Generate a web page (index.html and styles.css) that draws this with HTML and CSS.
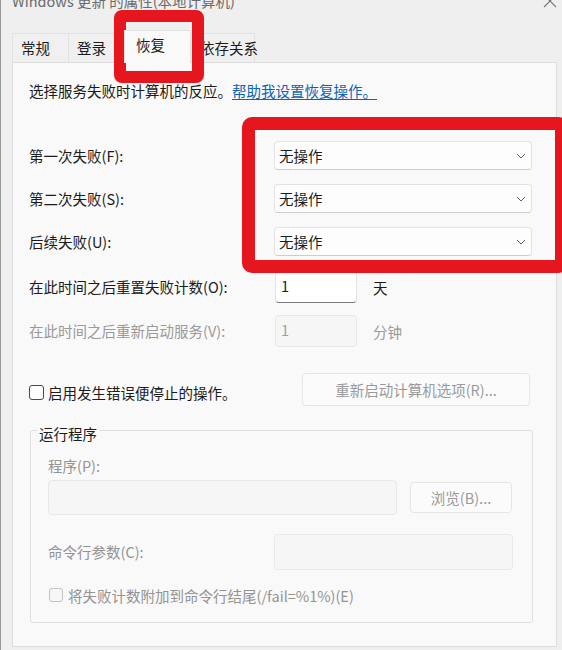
FILE: index.html
```html
<!DOCTYPE html>
<html lang="zh-CN">
<head>
<meta charset="utf-8">
<title>Windows 更新 的属性</title>
<link rel="stylesheet" href="styles.css">
</head>
<body>
<div class="window">
  <div class="titlebar">
    <span class="title">Windows 更新 的属性(本地计算机)</span>
    <svg class="close" width="14" height="14" viewBox="0 0 14 14"><path d="M1 1 L13 13 M13 1 L1 13" stroke="#777" stroke-width="1.1" fill="none"/></svg>
  </div>
  <div class="tabs">
    <div class="tab t1">常规</div>
    <div class="tab t2">登录</div>
    <div class="tab active">恢复</div>
    <div class="tab t4">依存关系</div>
  </div>
  <div class="panel">
    <p class="intro">选择服务失败时计算机的反应。<a class="link" href="#">帮助我设置恢复操作。</a></p>

    <div class="row r1">
      <span class="label">第一次失败(F):</span>
      <div class="select"><span>无操作</span><svg width="10" height="6" viewBox="0 0 10 6"><path d="M1 1 L5 5 L9 1" stroke="#5f5f5f" stroke-width="1" fill="none"/></svg></div>
    </div>
    <div class="row r2">
      <span class="label">第二次失败(S):</span>
      <div class="select"><span>无操作</span><svg width="10" height="6" viewBox="0 0 10 6"><path d="M1 1 L5 5 L9 1" stroke="#5f5f5f" stroke-width="1" fill="none"/></svg></div>
    </div>
    <div class="row r3">
      <span class="label">后续失败(U):</span>
      <div class="select"><span>无操作</span><svg width="10" height="6" viewBox="0 0 10 6"><path d="M1 1 L5 5 L9 1" stroke="#5f5f5f" stroke-width="1" fill="none"/></svg></div>
    </div>

    <div class="row r4">
      <span class="label">在此时间之后重置失败计数(O):</span>
      <div class="num">1</div>
      <span class="unit">天</span>
    </div>
    <div class="row r5 disabled">
      <span class="label">在此时间之后重新启动服务(V):</span>
      <div class="num num-off">1</div>
      <span class="unit">分钟</span>
    </div>

    <div class="row r6">
      <div class="chk-label"><span class="box"></span><span>启用发生错误便停止的操作。</span></div>
      <div class="btn btn-wide">重新启动计算机选项(R)...</div>
    </div>

    <div class="group">
      <div class="legend">运行程序</div>
      <div class="g-label">程序(P):</div>
      <div class="row prog-row">
        <div class="field field-prog"></div>
        <div class="btn btn-browse">浏览(B)...</div>
      </div>
      <div class="row cmd-row">
        <span class="g-label cmd-label">命令行参数(C):</span>
        <div class="field field-cmd"></div>
      </div>
      <div class="row chk2-row">
        <span class="box box-off"></span>
        <span class="g-text">将失败计数附加到命令行结尾(/fail=%1%)(E)</span>
      </div>
    </div>
  </div>

  <div class="mark mark-tab"></div>
  <div class="mark mark-selects"></div>
</div>
</body>
</html>
```

FILE: styles.css
```css
html, body {
  margin: 0;
  padding: 0;
}

body {
  background: #efefef;
  font-family: "Noto Sans CJK SC", "Noto Sans", sans-serif;
  font-size: 14.5px;
  color: #1b1b1b;
}

.window {
  position: relative;
  width: 562px;
  height: 650px;
  overflow: hidden;
  background: #efefef;
  box-shadow: inset 1px 0 0 #9a9a9a;
}

.titlebar {
  display: flex;
  height: 33px;
  box-sizing: border-box;
  padding: 0 5px 0 12px;
}

.title {
  font-size: 14.5px;
  line-height: 14px;
  margin-top: -6px;
  color: #6a6a6a;
  white-space: nowrap;
}

.close {
  margin-left: auto;
  margin-top: -6px;
}

.tabs {
  display: flex;
  align-items: flex-end;
  height: 29px;
  padding-left: 12px;
}

.tab {
  box-sizing: border-box;
  height: 29px;
  line-height: 27px;
  padding-left: 8px;
  border-top: 1px solid #e2e2e2;
  border-right: 1px solid #e2e2e2;
  background: #f0f0f0;
  white-space: nowrap;
}

.t1 {
  width: 57px;
  border-left: 1px solid #e2e2e2;
}

.t2 {
  width: 55px;
}

.active {
  width: 67px;
  height: 33px;
  margin-bottom: -1px;
  padding-left: 11px;
  border-left: 1px solid #e2e2e2;
  background: #f9f9f9;
  position: relative;
  z-index: 1;
}

.t4 {
  width: 64px;
  padding-left: 9px;
}

.panel {
  box-sizing: border-box;
  margin-left: 12px;
  width: 545px;
  height: 585px;
  border: 1px solid #dddddd;
  background: #f9f9f9;
  padding-left: 16px;
}

.intro {
  margin: 18px 0 0;
  line-height: 20px;
  white-space: nowrap;
}

.link {
  color: #0a63b8;
  text-decoration: underline;
  text-underline-offset: 2px;
}

.row {
  display: flex;
  align-items: center;
}

.label {
  width: 245px;
  flex: none;
  line-height: 20px;
  white-space: nowrap;
}

.r1 { margin-top: 40px; }
.r2, .r3 { margin-top: 14px; }
.r4 { margin-top: 15px; }
.r5 { margin-top: 12px; }
.r6 { margin-top: 26px; }

.select {
  box-sizing: border-box;
  width: 258px;
  height: 29px;
  border: 1px solid #e3e3e3;
  border-bottom-color: #cdcdcd;
  border-radius: 4px;
  background: #fdfdfd;
  display: flex;
  align-items: center;
  justify-content: space-between;
  padding: 0 5px 0 4px;
}

.num {
  box-sizing: border-box;
  width: 82px;
  height: 32px;
  margin-left: 1px;
  border: 1px solid #e3e3e3;
  border-bottom: 1px solid #7d7d7d;
  border-radius: 4px;
  background: #ffffff;
  padding-left: 5px;
  line-height: 28px;
}

.unit {
  margin-left: 16px;
}

.disabled {
  color: #9a9a9a;
}

.num-off {
  background: #f6f6f6;
  border: 1px solid #e8e8e8;
  color: #a0a0a0;
}

.chk-label {
  width: 273px;
  flex: none;
  display: flex;
  align-items: center;
  margin-top: 5px;
  white-space: nowrap;
}

.box {
  box-sizing: border-box;
  width: 15px;
  height: 15px;
  flex: none;
  border: 1px solid #4a4a4a;
  border-radius: 3px;
  background: #fdfdfd;
  margin-right: 4px;
}

.btn {
  box-sizing: border-box;
  display: flex;
  align-items: center;
  justify-content: center;
  border: 1px solid #e5e5e5;
  border-radius: 4px;
  background: #fbfbfb;
  color: #9a9a9a;
  white-space: nowrap;
}

.btn-wide {
  width: 228px;
  height: 33px;
}

.group {
  box-sizing: border-box;
  margin: 24px 0 0 1px;
  width: 503px;
  height: 193px;
  border: 1px solid #dfdfdf;
  border-radius: 3px;
  padding-left: 17px;
}

.legend {
  width: max-content;
  margin: -7px 0 0 -11px;
  padding: 0 2px;
  line-height: 20px;
  background: #f9f9f9;
  color: #1b1b1b;
}

.g-label {
  margin-top: 12px;
  line-height: 20px;
  color: #939393;
  white-space: nowrap;
}

.prog-row {
  margin-top: 4px;
}

.field {
  box-sizing: border-box;
  border: 1px solid #e8e8e8;
  border-radius: 4px;
  background: #f6f6f6;
}

.field-prog {
  width: 349px;
  height: 35px;
}

.btn-browse {
  width: 102px;
  height: 31px;
  margin-left: 13px;
}

.cmd-row {
  margin-top: 19px;
}

.cmd-label {
  width: 226px;
  flex: none;
  margin-top: 0;
}

.field-cmd {
  width: 239px;
  height: 36px;
}

.chk2-row {
  margin-top: 15px;
  height: 20px;
}

.box-off {
  width: 14px;
  height: 14px;
  margin-left: 1px;
  margin-right: 5px;
  border-color: #c2c2c2;
  background: #f7f7f7;
}

.g-text {
  color: #939393;
  white-space: nowrap;
}

.mark {
  position: absolute;
  box-sizing: border-box;
  border: 12px solid #e5161e;
}

.mark-tab {
  left: 114px;
  top: 10px;
  width: 90px;
  height: 73px;
  border-radius: 8px;
}

.mark-selects {
  left: 242px;
  top: 117px;
  width: 326px;
  height: 156px;
  border-width: 13px;
  border-radius: 10px;
}
```
